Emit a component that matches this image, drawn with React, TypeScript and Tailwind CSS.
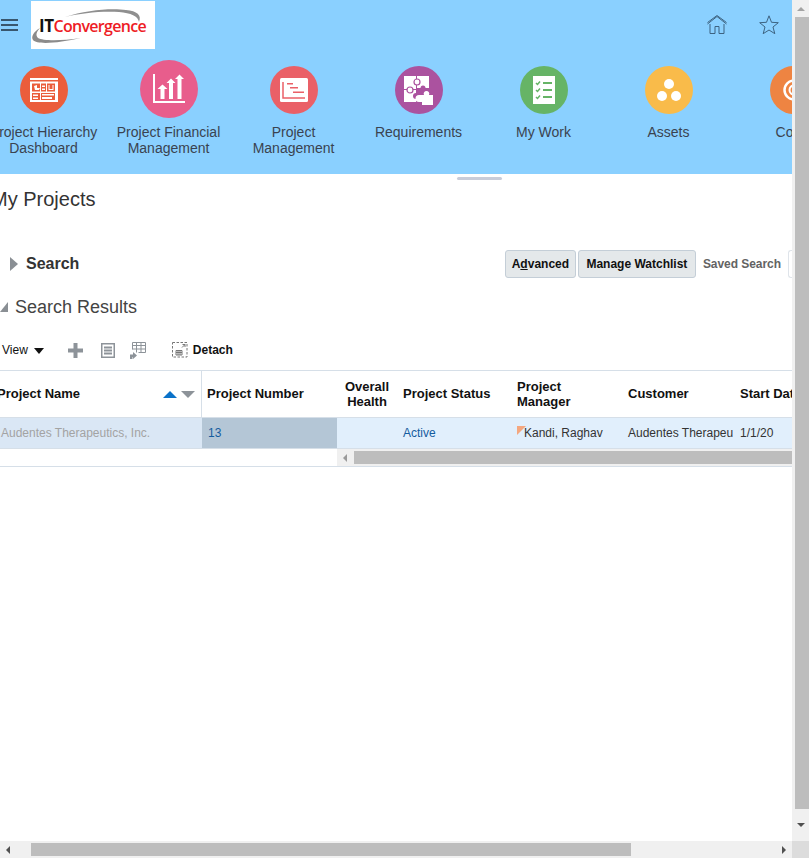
import { ReactNode } from "react";

const tiles: { label: ReactNode; color: string; big?: boolean; icon: ReactNode }[] = [
  {
    label: <>Project Hierarchy<br />Dashboard</>,
    color: "bg-[#eb5d3b]",
    icon: (
      <svg width="30" height="24" viewBox="0 0 30 24" fill="#fff">
        <path d="M1 0h28v2H1z" />
        <path fillRule="evenodd" d="M1 3.500h28V24H1zM3 5.500v8h8v-8zm9 0v8h5v-8zm6 0v8h8v-8zM3 15v7h8v-7zm9 0v7h14v-7z" />
        <path d="M5 8l3-1v3h3l-1 2H6z" />
        <path d="M13 7.500h3V9h-3zM13 10.500h3V12h-3zM19.500 7h1v4h3V7h1v5h-5zM4 16.500h5V18H4zM4 19.500h5V21H4zM13 16h12v1.500H13zM13 19h10v2H13z" />
      </svg>
    ),
  },
  {
    label: <>Project Financial<br />Management</>,
    color: "bg-[#e85d8c]",
    big: true,
    icon: (
      <svg width="32" height="30" viewBox="0 0 32 30" fill="#fff">
        <path d="M0 0h2v27h30v2H0z" />
        <path d="M4.500 15l5-4.500 5 4.500h-3v10h-4V15zM13.500 9l4.500-4.500L22.500 9h-2.500v16h-4V9zM22 5l4.500-4.500L31 5h-2.500v20h-4V5z" />
      </svg>
    ),
  },
  {
    label: <>Project<br />Management</>,
    color: "bg-[#ea6067]",
    icon: (
      <svg width="28" height="24" viewBox="0 0 28 24">
        <rect width="28" height="24" rx="1.500" fill="#fff" />
        <path d="M3 4v16h22" fill="none" stroke="#ea6067" strokeWidth="1.500" />
        <path d="M7 5h6v1.500H7zM10 9h8v1.500h-8zM13 13.500h11V15H13z" fill="#ea6067" />
      </svg>
    ),
  },
  {
    label: "Requirements",
    color: "bg-[#ab529f]",
    icon: (
      <svg width="30" height="29" viewBox="0 0 30 29" fill="#fff">
        <path d="M0 0h12v13H0zM13 0h12v12H13zM0 14h12v12H0z" />
        <circle cx="13" cy="6" r="3" stroke="#ab529f" strokeWidth="1.200" />
        <circle cx="6" cy="14" r="3" stroke="#ab529f" strokeWidth="1.200" />
        <circle cx="12" cy="20" r="3" fill="#ab529f" />
        <circle cx="19" cy="12" r="2.500" fill="#ab529f" />
        <path d="M15 19h5a2.800 2.800 0 1 1 5 0h4v10H18v-3h-3a3.500 3.500 0 0 1 0-7z" />
      </svg>
    ),
  },
  {
    label: "My Work",
    color: "bg-[#66b466]",
    icon: (
      <svg width="22" height="28" viewBox="0 0 22 28">
        <path d="M0 0h22v28H0z" fill="#fff" />
        <path d="M3 7l1.500 1.500L7 5.500M3 14l1.500 1.500L7 12.500M3 21l1.500 1.500L7 19.500" fill="none" stroke="#66b466" strokeWidth="1.500" />
        <path d="M10 6h9v2h-9zM10 13h9v2h-9zM10 20h9v2h-9z" fill="#66b466" />
      </svg>
    ),
  },
  {
    label: "Assets",
    color: "bg-[#f9bb4a]",
    icon: (
      <svg width="24" height="22" viewBox="0 0 24 22" fill="#fff">
        <circle cx="12" cy="5" r="5" />
        <circle cx="5" cy="17" r="5" />
        <circle cx="19" cy="17" r="5" />
      </svg>
    ),
  },
  {
    label: "Costs",
    color: "bg-[#ee8442]",
    icon: (
      <svg width="30" height="30" viewBox="0 0 30 30" fill="none" stroke="#fff">
        <circle cx="15" cy="15" r="9.500" strokeWidth="2.500" />
        <circle cx="15" cy="15" r="4.500" strokeWidth="2" />
      </svg>
    ),
  },
];

const columns = [
  { label: <>Overall<br />Health</>, width: "w-[62px]", pad: "justify-center pr-[2px] text-center" },
  { label: <span className="-mt-[1px] block">Project Status</span>, width: "w-[113px]", pad: "pl-[4px]" },
  { label: <>Project<br />Manager</>, width: "w-[111px]", pad: "pl-[5px]" },
  { label: <span className="-mt-[1px] block">Customer</span>, width: "w-[112px]", pad: "pl-[5px]" },
  { label: <span className="-mt-[1px] block">Start Date</span>, width: "w-[80px]", pad: "pl-[5px]" },
];

function Triangle({ className }: { className: string }) {
  return <span className={`block h-0 w-0 ${className}`} />;
}

function Logo() {
  return (
    <div className="relative h-[48px] w-[124px] shrink-0 bg-white">
      <svg className="absolute left-0 top-0" width="124" height="48" viewBox="0 0 124 48">
        <path d="M9 27C2 31 0 36 2 39C6 44 28 42 50 37C30 40 12 40 7 37C4 34 6 30 9 27Z" fill="#8b8b8b" />
        <path d="M34 16C55 9 80 7 95 9C106 10 111 14 108 21C107 15 100 12 88 11C70 10 50 12 34 16Z" fill="#8f8f8f" />
      </svg>
      <div className="absolute left-[8px] top-[15px] flex items-baseline whitespace-nowrap font-['Open_Sans',sans-serif] text-[16px] leading-[20px]">
        <span className="text-[17px] font-bold tracking-[-0.5px] text-[#111]">IT</span>
        <span className="font-semibold tracking-[-0.7px] text-[#ee1c25]">Convergence</span>
      </div>
    </div>
  );
}

function Tile({ tile }: { tile: (typeof tiles)[number] }) {
  return (
    <div className="flex w-[125px] shrink-0 flex-col items-center">
      <div className="flex h-[58px] items-center">
        <div className={`flex items-center justify-center rounded-full ${tile.color} ${tile.big ? "h-[58px] w-[58px]" : "mt-[2px] h-[48px] w-[48px]"}`}>
          {tile.icon}
        </div>
      </div>
      <div className="mt-[6px] whitespace-nowrap text-center text-[14px] leading-[16px] text-[#3a4350]">{tile.label}</div>
    </div>
  );
}

export default function App() {
  return (
    <div className="flex h-[858px] w-[809px] flex-col overflow-hidden bg-white font-['Liberation_Sans',Arial,sans-serif]">
      <div className="flex min-h-0 flex-1">
        <div className="w-[792px] shrink-0 overflow-hidden">
          {/* 上部ヘッダー */}
          <header className="h-[174px] bg-[#8ad0ff]">
            <div className="flex h-[60px] items-start">
              <div className="mt-[19px] ml-[1px] flex w-[17px] flex-col gap-[3px]">
                <span className="h-[2px] bg-[#38566e]" />
                <span className="h-[2px] bg-[#38566e]" />
                <span className="h-[2px] bg-[#38566e]" />
              </div>
              <div className="mt-[1px] ml-[13px]">
                <Logo />
              </div>
              <div className="ml-auto mt-[15px] mr-[13px] flex gap-[32px]">
                <svg width="20" height="20" viewBox="0 0 20 20" fill="none" stroke="#3d6381" strokeWidth="1">
                  <path d="M.5 9L10 1.500 19.500 9" />
                  <path d="M.5 7.500L10 .5l9.500 7" />
                  <path d="M3 9v9.500h5V11.500h4v7h5V9" />
                </svg>
                <svg width="20" height="20" viewBox="0 0 20 20" fill="none" stroke="#3d6381" strokeWidth="1">
                  <path d="M10 .8l2.500 6.500 6.800.4-5.300 4.300 1.800 6.700L10 15l-5.800 3.700L6 12 .7 7.700l6.800-.4z" />
                </svg>
              </div>
            </div>
            <div className="-ml-[19px] flex">
              {tiles.map((tile, i) => (
                <Tile key={i} tile={tile} />
              ))}
            </div>
          </header>

          {/* スプリッター */}
          <div className="h-[8px] pt-[3px]">
            <span className="ml-[457px] block h-[3px] w-[45px] rounded-sm bg-[#c8ccd9]" />
          </div>

          <h1 className="-ml-[9px] flex h-[34px] items-center text-[20px] font-normal text-[#333]">My Projects</h1>

          {/* 検索 */}
          <div className="mt-[34px] flex h-[28px] items-center">
            <Triangle className="ml-[10px] border-y-[7px] border-l-[8px] border-y-transparent border-l-[#8a8f94]" />
            <span className="ml-[8px] text-[16px] font-bold text-[#333]">Search</span>
            <button className="ml-auto h-[28px] w-[71px] rounded-[3px] border border-[#c4ced7] bg-[#e4e8ea] text-[12px] font-bold text-[#111]">
              A<span className="underline">d</span>vanced
            </button>
            <button className="ml-[2px] h-[28px] w-[118px] rounded-[3px] border border-[#c4ced7] bg-[#e4e8ea] text-[12px] font-bold text-[#111]">
              Manage Watchlist
            </button>
            <span className="ml-[7px] whitespace-nowrap text-[12px] font-bold tracking-[-0.05px] text-[#636363]">Saved Search</span>
            <span className="ml-[7px] h-[28px] w-[4px] rounded-l-[3px] border-y border-l border-[#dfe4ea]" />
          </div>

          <div className="mt-[15px] flex h-[28px] items-center">
            <Triangle className="border-b-[10px] border-l-[8px] border-b-[#8a8f94] border-l-transparent" />
            <h2 className="ml-[7px] text-[18px] font-normal text-[#444]">Search Results</h2>
          </div>

          {/* ツールバー */}
          <div className="mt-[14px] flex h-[30px] items-center text-[#111]">
            <span className="ml-[2px] text-[12px]">View</span>
            <Triangle className="ml-[6px] mt-[1px] border-x-[5px] border-t-[6px] border-x-transparent border-t-[#111]" />
            <svg className="ml-[24px]" width="15" height="15" viewBox="0 0 15 15" fill="#8d9399">
              <path d="M5.500 0h4v5.500H15v4H9.500V15h-4V9.500H0v-4h5.500z" />
            </svg>
            <svg className="ml-[18px]" width="14" height="15" viewBox="0 0 14 15" fill="none" stroke="#8d9399">
              <path d="M.75.75h12.500v13.500H.75z" strokeWidth="1.500" />
              <path d="M3 4.500h8M3 7.500h8M3 10.500h8" strokeWidth="2" />
            </svg>
            <svg className="ml-[15px]" width="16" height="17" viewBox="0 0 16 17" fill="none" stroke="#8d9399">
              <path d="M2.500.5h13v10h-7M2.500.5v7M6.500.5v10M11 .5v10M2.500 3.500h13M2.500 7h13" />
              <path d="M0 17v-4.500h3V10l4 3.500-4 3.500v-2H2.500v2z" fill="#8d9399" stroke="none" />
            </svg>
            <svg className="ml-[26px]" width="16" height="16" viewBox="0 0 16 16" fill="none" stroke="#777">
              <path d="M.5.5h14.500v14.500H.5z" strokeDasharray="2.500 1.500" />
              <path d="M4 8.500h6v4.500H4zM4 10.500h6M6 8.500v4.500M8 8.500v4.500" />
              <path d="M10 5.500L13 2.500M10.500 2.500H13V5" />
            </svg>
            <span className="ml-[5px] text-[12px] font-bold">Detach</span>
          </div>

          {/* 検索結果テーブル */}
          <div className="mt-[5px] border-y border-[#d6dfe8]">
            <div className="flex h-[47px] border-b border-[#d6dfe8] text-[13px] font-bold leading-[15px] text-[#111]">
              <div className="flex w-[202px] shrink-0 items-center justify-between border-r border-[#d6dfe8] pr-[6px]">
                <span className="-ml-[3px] -mt-[1px]">Project Name</span>
                <span className="flex gap-[4px]">
                  <Triangle className="border-x-[7px] border-b-[7px] border-x-transparent border-b-[#0a72c9]" />
                  <Triangle className="border-x-[7px] border-t-[7px] border-x-transparent border-t-[#8d9399]" />
                </span>
              </div>
              <div className="flex w-[135px] shrink-0 items-center pl-[5px]">
                <span className="-mt-[1px]">Project Number</span>
              </div>
              {columns.map((col, i) => (
                <div key={i} className={`flex shrink-0 items-center whitespace-nowrap ${col.width} ${col.pad}`}>
                  <span>{col.label}</span>
                </div>
              ))}
            </div>
            <div className="flex h-[31px] border-b border-[#d6dfe8] text-[12px] leading-[30px]">
              <div className="w-[202px] shrink-0 truncate bg-[#dae7f5] pl-[1px] text-[#a3a3a3]">Audentes Therapeutics, Inc.</div>
              <div className="w-[135px] shrink-0 bg-[#b4c6d6] pl-[6px] text-[#145c9e]">13</div>
              <div className="flex flex-1 bg-[#e1effc] text-[#333]">
                <div className="w-[62px] shrink-0" />
                <div className="w-[113px] shrink-0 pl-[4px] text-[#145c9e]">Active</div>
                <div className="relative w-[111px] shrink-0 pl-[12px]">
                  <span className="absolute left-[5px] top-[8px] h-0 w-0 border-b-[9px] border-l-[9px] border-b-transparent border-l-[#f4a77f]" />
                  Kandi, Raghav
                </div>
                <div className="w-[112px] shrink-0 overflow-hidden whitespace-nowrap pl-[5px]">Audentes Therapeu</div>
                <div className="pl-[5px]">1/1/20</div>
              </div>
            </div>
            <div className="flex h-[17px]">
              <div className="w-[337px] shrink-0" />
              <div className="flex flex-1 items-center bg-[#f0f0f0]">
                <Triangle className="ml-[6px] border-y-[4px] border-r-[4px] border-y-transparent border-r-[#9a9a9a]" />
                <span className="ml-[7px] h-[13px] flex-1 bg-[#bdbdbd]" />
              </div>
            </div>
          </div>
        </div>

        {/* 縦スクロールバー */}
        <div className="flex w-[17px] shrink-0 flex-col items-center bg-[#f0f0f0]">
          <div className="flex h-[17px] items-center">
            <Triangle className="border-x-[4px] border-b-[4px] border-x-transparent border-b-[#a3a3a3]" />
          </div>
          <div className="ml-[2px] w-[14px] flex-1 bg-[#bdbdbd]" />
          <div className="flex h-[32px] items-center">
            <Triangle className="border-x-[4px] border-t-[4px] border-x-transparent border-t-[#505050]" />
          </div>
        </div>
      </div>

      {/* 横スクロールバー */}
      <div className="flex h-[17px] shrink-0 bg-[#f0f0f0]">
        <div className="flex w-[792px] items-center">
          <Triangle className="ml-[6px] border-y-[4px] border-r-[4px] border-y-transparent border-r-[#505050]" />
          <span className="ml-[21px] h-[13px] w-[600px] bg-[#bdbdbd]" />
          <Triangle className="ml-auto mr-[6px] border-y-[4px] border-l-[4px] border-y-transparent border-l-[#505050]" />
        </div>
        <div className="w-[17px] bg-[#dcdcdc]" />
      </div>
    </div>
  );
}
